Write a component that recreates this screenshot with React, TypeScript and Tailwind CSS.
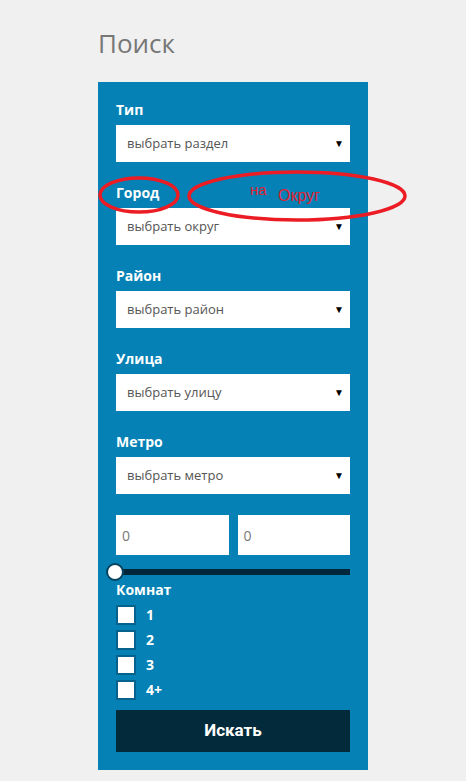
import React from 'react';

const selects = [
  { label: 'Тип', placeholder: 'выбрать раздел' },
  { label: 'Город', placeholder: 'выбрать округ' },
  { label: 'Район', placeholder: 'выбрать район' },
  { label: 'Улица', placeholder: 'выбрать улицу' },
  { label: 'Метро', placeholder: 'выбрать метро' },
];

const rooms = ['1', '2', '3', '4+'];

function SelectField({ label, placeholder }: { label: string; placeholder: string }) {
  return (
    <div className="flex flex-col">
      <label className="h-5 text-[14px] leading-5 font-bold text-white">{label}</label>
      <div className="mt-[5px] h-[37px] bg-white flex items-center justify-between pl-[11px] pr-[6px]">
        <span className="text-[13px] text-[#555]">{placeholder}</span>
        <span className="text-[10px] text-black">▼</span>
      </div>
    </div>
  );
}

export default function App() {
  return (
    <div
      className="relative min-h-[781px] w-[466px] bg-[#f0f0f0] pl-[98px] pt-[26px]"
      style={{ fontFamily: '"Open Sans", "Liberation Sans", sans-serif' }}
    >
      <h1 className="text-[26px] leading-[34px] text-[#777] font-normal">Поиск</h1>

      <div className="mt-[22px] w-[270px] bg-[#0581b5] px-[18px] pt-[18px] pb-[18px]">
        <div className="flex flex-col gap-[21px]">
          {selects.map((s) => (
            <SelectField key={s.label} label={s.label} placeholder={s.placeholder} />
          ))}
        </div>

        <div className="mt-[21px] flex gap-[9px]">
          <div className="h-10 flex-1 bg-white flex items-center pl-[6px] text-[14px] text-[#777]">0</div>
          <div className="h-10 flex-1 bg-white flex items-center pl-[6px] text-[14px] text-[#777]">0</div>
        </div>

        <div className="relative mt-[14px] h-[6px] bg-[#02273a]">
          <div className="absolute left-[-10px] top-[-6px] h-[18px] w-[18px] rounded-full bg-white border-2 border-[#02435f]" />
        </div>

        <div className="mt-[5px] h-5 text-[14px] leading-5 font-bold text-white">Комнат</div>

        <div className="mt-[5px] flex flex-col gap-[5px]">
          {rooms.map((r) => (
            <div key={r} className="flex h-5 items-center gap-[10px]">
              <div className="h-5 w-5 bg-white border-2 border-[#04628c]" />
              <span className="text-[14px] leading-5 font-bold text-white">{r}</span>
            </div>
          ))}
        </div>

        <button
          className="mt-[10px] h-[42px] w-full bg-[#022a3a] text-white text-[17px] font-bold"
          style={{ fontFamily: 'Roboto, "Liberation Sans", sans-serif' }}
        >
          Искать
        </button>
      </div>

      {/* red annotation over the form */}
      <svg className="absolute left-0 top-0 pointer-events-none" width="466" height="781">
        <ellipse cx="139" cy="195" rx="39" ry="17" fill="none" stroke="#ec1c24" strokeWidth="3.5" />
        <ellipse cx="297" cy="196" rx="108" ry="24" fill="none" stroke="#ec1c24" strokeWidth="3.5" />
      </svg>
      <span
        className="absolute left-[250px] top-[179px] text-[15px] text-[#e02030]"
        style={{ fontFamily: '"Liberation Sans", sans-serif' }}
      >
        на
      </span>
      <span
        className="absolute left-[278px] top-[184px] text-[16px] text-[#e02030]"
        style={{ fontFamily: '"Liberation Sans", sans-serif' }}
      >
        Округ
      </span>
    </div>
  );
}
